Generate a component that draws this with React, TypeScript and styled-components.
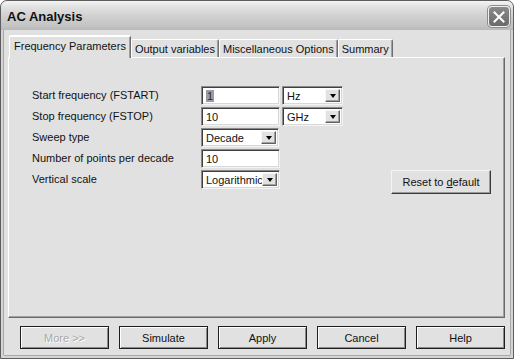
import React from "react";
import styled, { createGlobalStyle, css } from "styled-components";

const Global = createGlobalStyle`
  html, body { margin: 0; padding: 0; background: #ffffff; }
  body { font-family: "Liberation Sans", Arial, sans-serif; font-size: 11px; color: #000; }
  * { box-sizing: border-box; }
`;

const Window = styled.div`
  width: 514px;
  height: 359px;
  border: 1px solid #5e5e5e;
  border-radius: 7px 7px 0 0;
  background: #d4d4d4;
  display: flex;
  flex-direction: column;
  overflow: hidden;
`;

const TitleBar = styled.div`
  height: 29px;
  flex: none;
  display: flex;
  align-items: center;
  padding: 0 3px 0 6px;
  background: linear-gradient(
    to bottom,
    #f4f4f4 0%,
    #e2e2e2 20%,
    #cfcfcf 55%,
    #c4c4c4 85%,
    #b9b9b9 100%
  );
  border-radius: 6px 6px 0 0;
`;

const Title = styled.span`
  flex: 1;
  font-family: "Liberation Sans", Arial, sans-serif;
  font-weight: bold;
  font-size: 13px;
  color: #111;
  padding-top: 2px;
`;

const CloseButton = styled.div`
  width: 22px;
  height: 21px;
  margin-top: 2px;
  border-radius: 4px;
  border: 1px solid #f0f0f0;
  background: linear-gradient(to bottom, #8a8a8a, #6a6a6a);
  box-shadow: 0 0 0 1px #8c8c8c;
  display: flex;
  align-items: center;
  justify-content: center;
`;

const Client = styled.div`
  flex: 1;
  margin: 0 3px 3px 3px;
  padding: 5px 5px 0 4px;
  background: #e1e1e1;
  display: flex;
  flex-direction: column;
  box-shadow: -1px 0 0 #a8a8a8, 1px 0 0 #a8a8a8, 0 1px 0 #a8a8a8;
`;

const TabStrip = styled.div`
  height: 22px;
  flex: none;
  display: flex;
  align-items: flex-end;
  padding-left: 1px;
  position: relative;
  z-index: 1;
`;

const Tab = styled.div<{ $active?: boolean }>`
  height: 18px;
  padding: 0 3px;
  display: flex;
  align-items: center;
  font-size: 11px;
  color: #111;
  background: #e1e1e1;
  border-top: 1px solid #ffffff;
  border-left: 1px solid #ffffff;
  border-right: 1px solid #6e6e6e;
  box-shadow: inset -1px 0 0 #a0a0a0;
  border-radius: 2px 2px 0 0;
  white-space: nowrap;
  ${(p) =>
    p.$active &&
    css`
      height: 23px;
      margin-bottom: -1px;
      padding: 0 4px 3px 4px;
      border-top: 2px solid #ffffff;
    `}
`;

const Panel = styled.div`
  flex: 1;
  border-top: 1px solid #ffffff;
  border-left: 1px solid #ffffff;
  border-right: 1px solid #6a6a6a;
  border-bottom: 1px solid #6a6a6a;
  box-shadow: inset -1px -1px 0 #a0a0a0;
  padding: 28px 13px 0 23px;
  display: flex;
  flex-direction: column;
  gap: 2px;
`;

const Row = styled.div`
  display: flex;
  align-items: flex-start;
  gap: 2px;
`;

const Label = styled.div`
  width: 167px;
  height: 19px;
  line-height: 18px;
  font-size: 11px;
  color: #111;
  white-space: nowrap;
`;

const sunken = css`
  height: 19px;
  background: #ffffff;
  border-top: 1px solid #8a8a8a;
  border-left: 1px solid #8a8a8a;
  border-right: 1px solid #f4f4f4;
  border-bottom: 1px solid #f4f4f4;
  box-shadow: inset 1px 1px 0 #404040, inset -1px -1px 0 #d8d8d8;
`;

const TextBox = styled.div<{ $w: number }>`
  ${sunken};
  width: ${(p) => p.$w}px;
  padding: 2px 0 0 4px;
  line-height: 14px;
  font-size: 11px;
  color: #111;
`;

const Selected = styled.span`
  background: #9c9c9c;
  color: #2a2a2a;
  padding: 0 1px;
`;

const Select = styled.div<{ $w: number }>`
  ${sunken};
  width: ${(p) => p.$w}px;
  display: flex;
  align-items: stretch;
  padding: 2px 2px 2px 4px;
`;

const SelectText = styled.span`
  flex: 1;
  line-height: 14px;
  font-size: 11px;
  color: #111;
  white-space: nowrap;
  overflow: hidden;
`;

const DropButton = styled.div`
  width: 15px;
  background: #e2e2e2;
  border-top: 1px solid #f8f8f8;
  border-left: 1px solid #f8f8f8;
  border-right: 1px solid #606060;
  border-bottom: 1px solid #606060;
  box-shadow: inset -1px -1px 0 #a0a0a0;
  display: flex;
  align-items: center;
  justify-content: center;
`;

const Arrow = styled.span`
  width: 0;
  height: 0;
  border-left: 3.5px solid transparent;
  border-right: 3.5px solid transparent;
  border-top: 4px solid #000;
`;

const Button = styled.div<{ $w: number; $h: number; $disabled?: boolean }>`
  width: ${(p) => p.$w}px;
  height: ${(p) => p.$h}px;
  flex: none;
  display: flex;
  align-items: center;
  justify-content: center;
  font-size: 11px;
  color: ${(p) => (p.$disabled ? "#a8a8a8" : "#111")};
  background: #e1e1e1;
  border: 1px solid #1e1e1e;
  box-shadow: inset 1px 1px 0 #ffffff, inset -1px -1px 0 #8a8a8a;
  ${(p) =>
    p.$disabled &&
    css`
      text-shadow: 1px 1px 0 #ffffff;
    `}
`;

const ResetButton = styled(Button)`
  margin-left: auto;
  border-color: #f4f4f4 #3a3a3a #3a3a3a #f4f4f4;
  box-shadow: inset -1px -1px 0 #9a9a9a;
`;

const Footer = styled.div`
  flex: none;
  display: flex;
  gap: 10px;
  padding: 8px 0 6px 12px;
`;

const Dropdown = ({ w, value }: { w: number; value: string }) => (
  <Select $w={w}>
    <SelectText>{value}</SelectText>
    <DropButton>
      <Arrow />
    </DropButton>
  </Select>
);

export default function App() {
  return (
    <>
      <Global />
      <Window>
        <TitleBar>
          <Title>AC Analysis</Title>
          <CloseButton>
            <svg width="12" height="12" viewBox="0 0 12 12">
              <path d="M1.5 1.5 L10.5 10.5 M10.5 1.5 L1.5 10.5" stroke="#ffffff" strokeWidth="2" strokeLinecap="square" />
            </svg>
          </CloseButton>
        </TitleBar>
        <Client>
          <TabStrip>
            <Tab $active>Frequency Parameters</Tab>
            <Tab>Output variables</Tab>
            <Tab>Miscellaneous Options</Tab>
            <Tab>Summary</Tab>
          </TabStrip>
          <Panel>
            <Row>
              <Label>Start frequency (FSTART)</Label>
              <TextBox $w={79}>
                <Selected>1</Selected>
              </TextBox>
              <Dropdown w={61} value="Hz" />
            </Row>
            <Row>
              <Label>Stop frequency (FSTOP)</Label>
              <TextBox $w={79}>10</TextBox>
              <Dropdown w={61} value="GHz" />
            </Row>
            <Row>
              <Label>Sweep type</Label>
              <Dropdown w={78} value="Decade" />
            </Row>
            <Row>
              <Label>Number of points per decade</Label>
              <TextBox $w={79}>10</TextBox>
            </Row>
            <Row>
              <Label>Vertical scale</Label>
              <Dropdown w={79} value="Logarithmic" />
              <ResetButton $w={100} $h={24}>
                <span>
                  Reset to <u>d</u>efault
                </span>
              </ResetButton>
            </Row>
          </Panel>
          <Footer>
            <Button $w={89} $h={23} $disabled>
              More &gt;&gt;
            </Button>
            <Button $w={89} $h={23}>Simulate</Button>
            <Button $w={89} $h={23}>Apply</Button>
            <Button $w={89} $h={23}>Cancel</Button>
            <Button $w={89} $h={23}>Help</Button>
          </Footer>
        </Client>
      </Window>
    </>
  );
}
